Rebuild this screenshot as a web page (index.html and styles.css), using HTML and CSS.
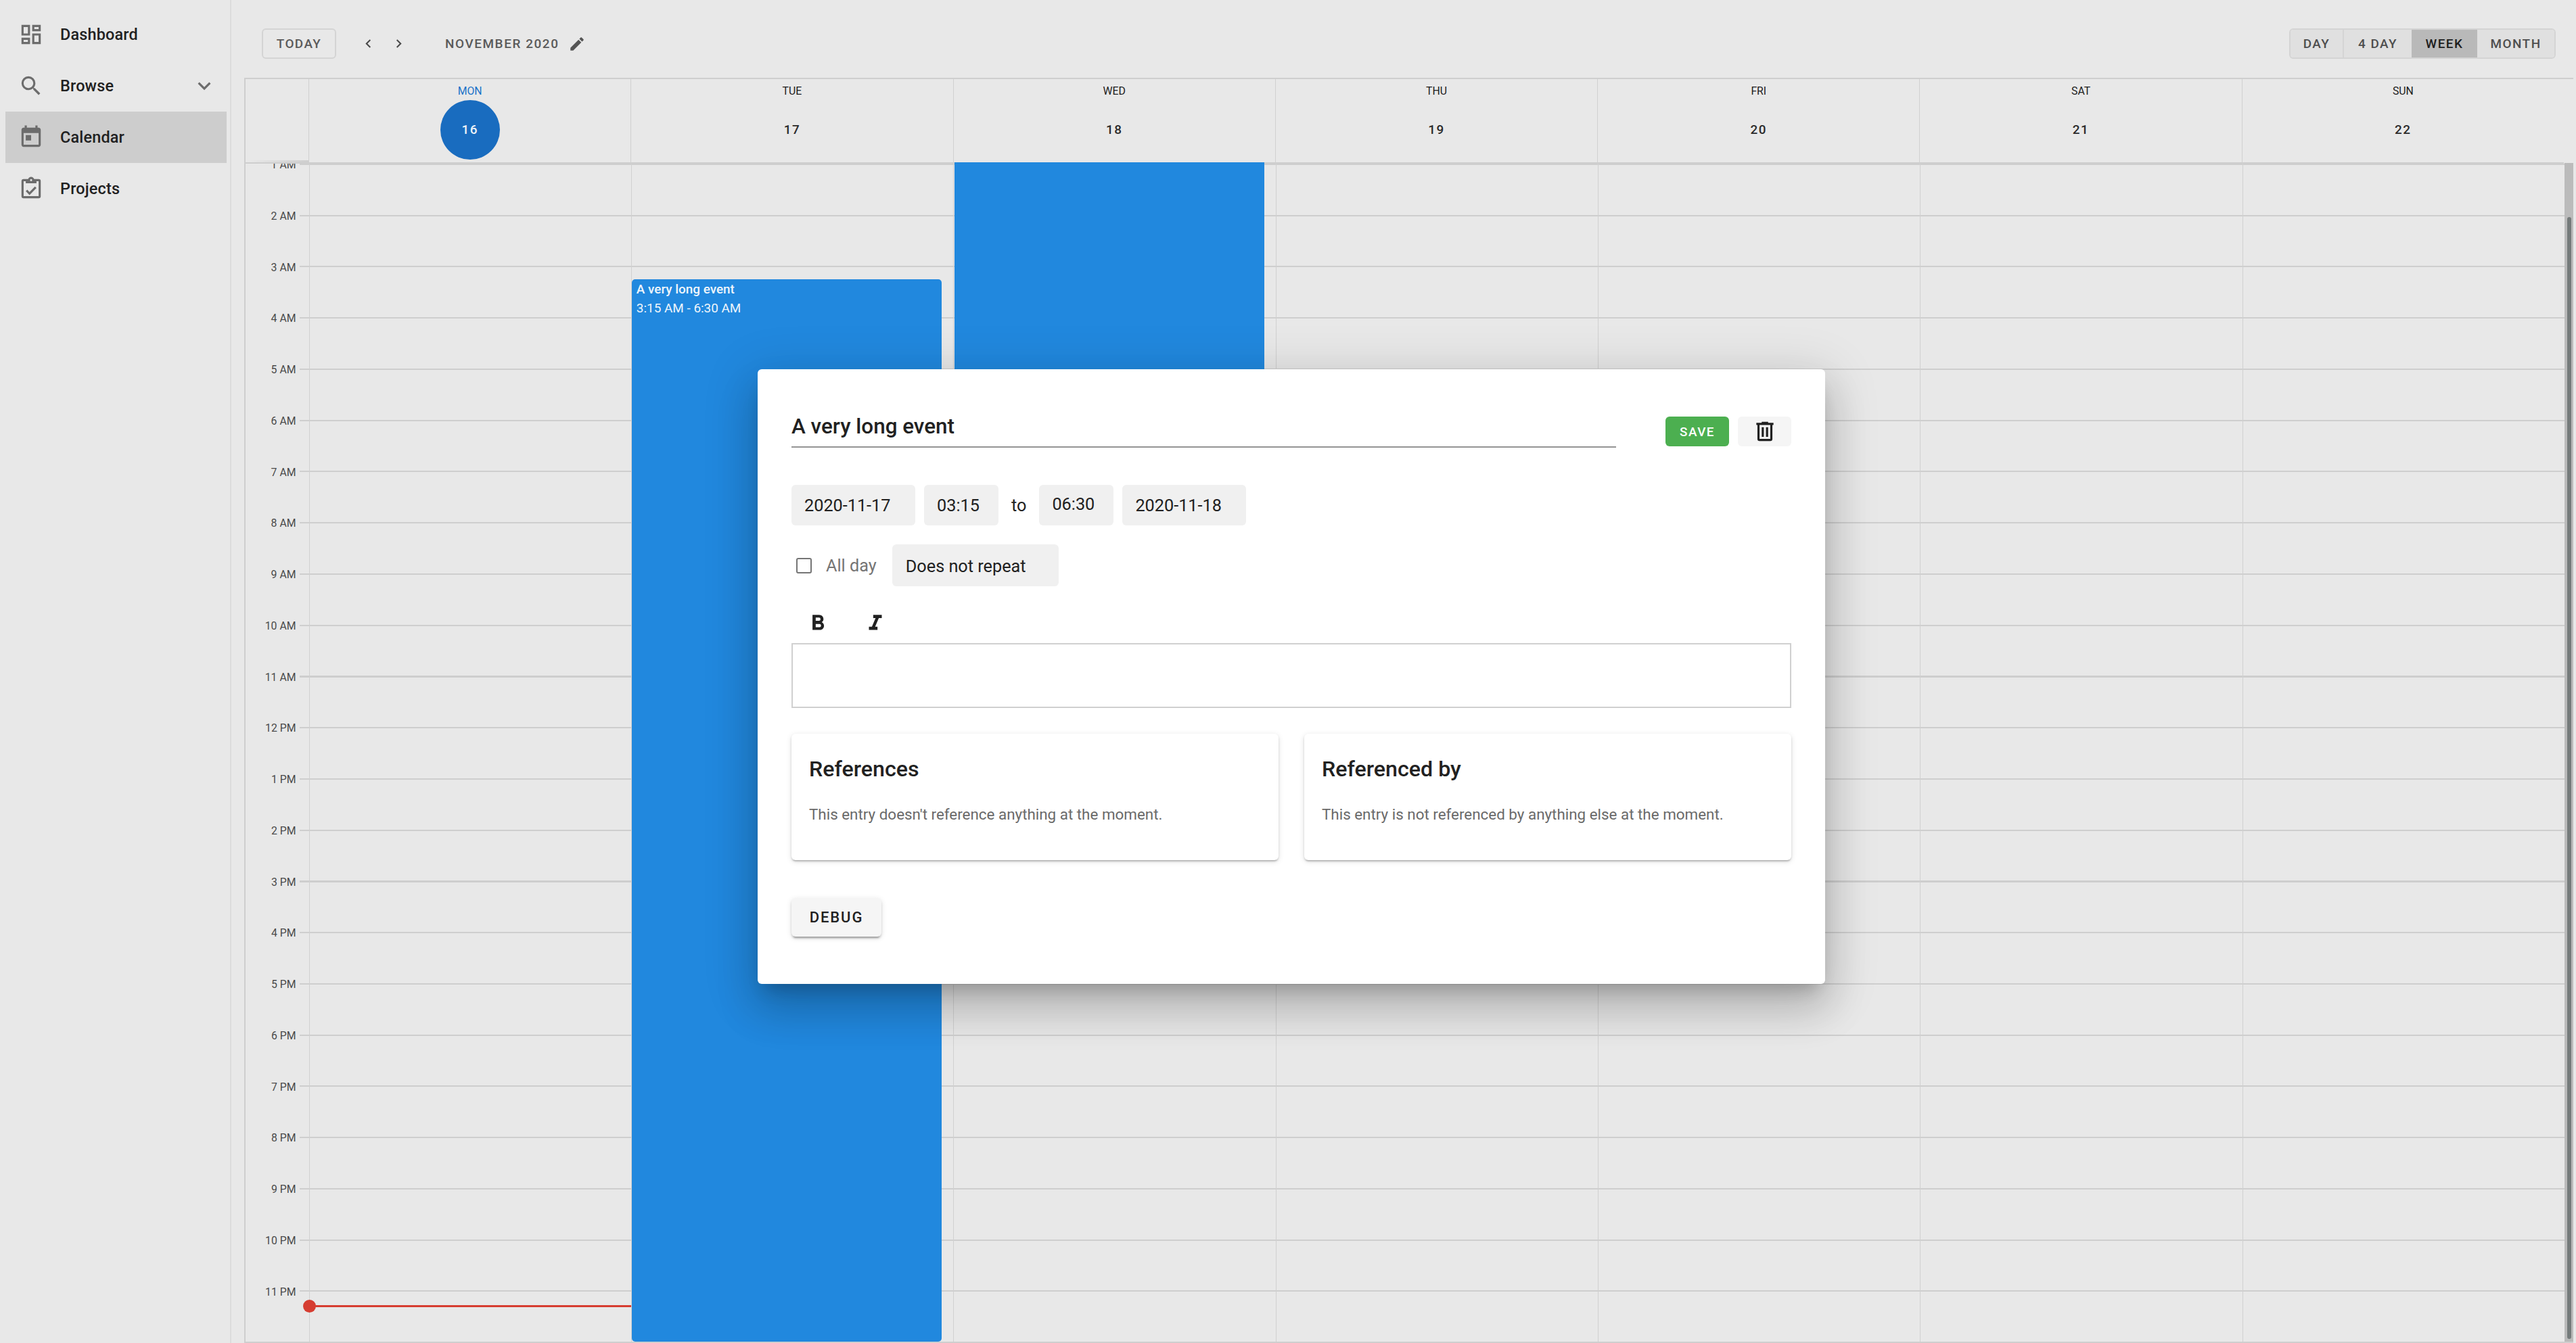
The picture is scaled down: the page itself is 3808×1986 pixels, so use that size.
FILE: index.html
```html
<!DOCTYPE html>
<html lang="en">
<head>
    <meta charset="UTF-8">
    <title>Calendar</title>
    <link rel="stylesheet" href="styles.css">
</head>
<body>
    <!-- Sidebar -->
    <nav class="sidebar">
        <a class="nav-item">
            <svg class="nav-icon" viewBox="0 0 24 24"><path d="M19,5V7H15V5H19M9,5V11H5V5H9M19,13V19H15V13H19M9,17V19H5V17H9M21,3H13V9H21V3M11,3H3V13H11V3M21,11H13V21H21V11M11,15H3V21H11V15Z"/></svg>
            <span>Dashboard</span>
        </a>
        <a class="nav-item">
            <svg class="nav-icon" viewBox="0 0 24 24"><path d="M9.5,3A6.5,6.5 0 0,1 16,9.5C16,11.11 15.41,12.59 14.44,13.73L14.71,14H15.5L20.5,19L19,20.5L14,15.5V14.71L13.73,14.44C12.59,15.41 11.11,16 9.5,16A6.5,6.5 0 0,1 3,9.5A6.5,6.5 0 0,1 9.5,3M9.5,5C7,5 5,7 5,9.5C5,12 7,14 9.5,14C12,14 14,12 14,9.5C14,7 12,5 9.5,5Z"/></svg>
            <span>Browse</span>
            <svg class="nav-caret" viewBox="0 0 24 24"><path d="M7.41,8.58L12,13.17L16.59,8.58L18,10L12,16L6,10L7.41,8.58Z"/></svg>
        </a>
        <a class="nav-item active">
            <svg class="nav-icon" viewBox="0 0 24 24"><path d="M7 10H12V15H7V10M19 19H5V8H19V19M19 3H18V1H16V3H8V1H6V3H5C3.89 3 3 3.9 3 5V19C3 20.1 3.9 21 5 21H19C20.1 21 21 20.1 21 19V5C21 3.9 20.1 3 19 3Z"/></svg>
            <span>Calendar</span>
        </a>
        <a class="nav-item">
            <svg class="nav-icon" viewBox="0 0 24 24"><path d="M19,3H14.82C14.4,1.84 13.3,1 12,1C10.7,1 9.6,1.84 9.18,3H5A2,2 0 0,0 3,5V19A2,2 0 0,0 5,21H19A2,2 0 0,0 21,19V5A2,2 0 0,0 19,3M12,3A1,1 0 0,1 13,4A1,1 0 0,1 12,5A1,1 0 0,1 11,4A1,1 0 0,1 12,3M7,7H17V5H19V19H5V5H7V7M17,11.4L15.6,10L10.5,15.1L8.4,13L7,14.4L10.5,18L17,11.4Z"/></svg>
            <span>Projects</span>
        </a>
    </nav>

    <main class="main">
        <!-- Toolbar -->
        <div class="toolbar">
            <button class="btn-today">TODAY</button>
            <svg class="chevron chevron-prev" viewBox="0 0 24 24"><path d="M15.41,16.58L10.83,12L15.41,7.41L14,6L8,12L14,18L15.41,16.58Z"/></svg>
            <svg class="chevron chevron-next" viewBox="0 0 24 24"><path d="M8.59,16.58L13.17,12L8.59,7.41L10,6L16,12L10,18L8.59,16.58Z"/></svg>
            <span class="month">NOVEMBER 2020</span>
            <svg class="pencil" viewBox="0 0 24 24"><path d="M20.71,7.04C21.1,6.65 21.1,6 20.71,5.63L18.37,3.29C18,2.9 17.35,2.9 16.96,3.29L15.12,5.12L18.87,8.87M3,17.25V21H6.75L17.81,9.93L14.06,6.18L3,17.25Z"/></svg>
            <div class="view-toggle">
                <button class="view-btn view-day">DAY</button>
                <button class="view-btn view-four">4 DAY</button>
                <button class="view-btn view-week active">WEEK</button>
                <button class="view-btn view-month">MONTH</button>
            </div>
        </div>

        <!-- Calendar -->
        <div class="calendar">
            <div class="cal-head">
                <div class="corner"></div>
                <div class="head-cell today"><span class="head-name">MON</span><span class="head-date">16</span></div>
                <div class="head-cell"><span class="head-name">TUE</span><span class="head-date">17</span></div>
                <div class="head-cell"><span class="head-name">WED</span><span class="head-date">18</span></div>
                <div class="head-cell"><span class="head-name">THU</span><span class="head-date">19</span></div>
                <div class="head-cell"><span class="head-name">FRI</span><span class="head-date">20</span></div>
                <div class="head-cell"><span class="head-name">SAT</span><span class="head-date">21</span></div>
                <div class="head-cell"><span class="head-name">SUN</span><span class="head-date">22</span></div>
            </div>
            <div class="cal-body">
                <div class="times">
                    <div class="hour"><span>1 AM</span></div>
                    <div class="hour"><span>2 AM</span></div>
                    <div class="hour"><span>3 AM</span></div>
                    <div class="hour"><span>4 AM</span></div>
                    <div class="hour"><span>5 AM</span></div>
                    <div class="hour"><span>6 AM</span></div>
                    <div class="hour"><span>7 AM</span></div>
                    <div class="hour"><span>8 AM</span></div>
                    <div class="hour"><span>9 AM</span></div>
                    <div class="hour"><span>10 AM</span></div>
                    <div class="hour"><span>11 AM</span></div>
                    <div class="hour"><span>12 PM</span></div>
                    <div class="hour"><span>1 PM</span></div>
                    <div class="hour"><span>2 PM</span></div>
                    <div class="hour"><span>3 PM</span></div>
                    <div class="hour"><span>4 PM</span></div>
                    <div class="hour"><span>5 PM</span></div>
                    <div class="hour"><span>6 PM</span></div>
                    <div class="hour"><span>7 PM</span></div>
                    <div class="hour"><span>8 PM</span></div>
                    <div class="hour"><span>9 PM</span></div>
                    <div class="hour"><span>10 PM</span></div>
                    <div class="hour"><span>11 PM</span></div>
                </div>
                <div class="day">
                    <div class="now-line"></div>
                </div>
                <div class="day">
                    <div class="event event-tue">
                        <div class="event-title">A very long event</div>
                        <div class="event-time">3:15 AM - 6:30 AM</div>
                    </div>
                </div>
                <div class="day">
                    <div class="event event-wed"></div>
                </div>
                <div class="day"></div>
                <div class="day"></div>
                <div class="day"></div>
                <div class="day"></div>
                <div class="scrollbar"><div class="scroll-thumb"></div></div>
            </div>
        </div>
    </main>

    <!-- Event dialog -->
    <div class="dialog">
        <div class="dialog-top">
            <div class="title-field">A very long event</div>
            <button class="btn-save">SAVE</button>
            <button class="btn-delete">
                <svg viewBox="0 0 24 24"><path d="M9,3V4H4V6H5V19A2,2 0 0,0 7,21H17A2,2 0 0,0 19,19V6H20V4H15V3H9M7,6H17V19H7V6M9,8V17H11V8H9M13,8V17H15V8H13Z"/></svg>
            </button>
        </div>
        <div class="date-row">
            <div class="chip chip-date">2020-11-17</div>
            <div class="chip chip-time">03:15</div>
            <span class="to">to</span>
            <div class="chip chip-time chip-end">06:30</div>
            <div class="chip chip-date">2020-11-18</div>
        </div>
        <div class="option-row">
            <span class="checkbox"></span>
            <span class="allday">All day</span>
            <div class="chip chip-select">Does not repeat</div>
        </div>
        <div class="format-row">
            <svg viewBox="0 0 24 24"><path d="M13.5,15.5H10V12.5H13.5A1.5,1.5 0 0,1 15,14A1.5,1.5 0 0,1 13.5,15.5M10,6.5H13A1.5,1.5 0 0,1 14.5,8A1.5,1.5 0 0,1 13,9.5H10M15.6,10.79C16.57,10.11 17.25,9 17.25,8C17.25,5.74 15.5,4 13.25,4H7V18H14.04C16.14,18 17.75,16.3 17.75,14.21C17.75,12.69 16.89,11.39 15.6,10.79Z"/></svg>
            <svg viewBox="0 0 24 24"><path d="M10,4V7H12.21L8.79,15H6V18H14V15H11.79L15.21,7H18V4H10Z"/></svg>
        </div>
        <div class="editor"></div>
        <div class="ref-cards">
            <div class="ref-card">
                <h3>References</h3>
                <p>This entry doesn't reference anything at the moment.</p>
            </div>
            <div class="ref-card">
                <h3>Referenced by</h3>
                <p>This entry is not referenced by anything else at the moment.</p>
            </div>
        </div>
        <button class="btn-debug">DEBUG</button>
    </div>
</body>
</html>
```

FILE: styles.css
```css
* {
    box-sizing: border-box;
}
body {
    margin: 0;
    width: 3808px;
    height: 1986px;
    display: flex;
    overflow: hidden;
    font-family: Roboto, sans-serif;
    background-color: #e8e8e8;
    color: #212121;
}
button {
    font-family: inherit;
    border: 0;
    padding: 0;
}

/* Sidebar */
.sidebar {
    width: 342px;
    flex-shrink: 0;
    padding: 13px 5px 0 8px;
    border-right: 2px solid #dcdcdc;
}
.nav-item {
    height: 76px;
    display: flex;
    align-items: center;
    padding-left: 19px;
    gap: 24px;
    font-size: 23.4px;
    font-weight: 500;
    letter-spacing: 0.2px;
    color: #212121;
}
.nav-item.active {
    background-color: #cdcdcd;
}
.nav-icon {
    width: 38px;
    height: 38px;
    fill: #6c6c6c;
}
.nav-caret {
    width: 38px;
    height: 38px;
    margin-left: auto;
    margin-right: 14px;
    fill: #6c6c6c;
}

/* Toolbar */
.main {
    flex: 1;
    min-width: 0;
    padding: 0 4px 0 19px;
}
.toolbar {
    height: 115px;
    display: flex;
    align-items: center;
    padding: 14px 26px 0 26px;
}
.btn-today {
    width: 110px;
    height: 45px;
    background: transparent;
    border: 2px solid #d4d4d4;
    border-radius: 6px;
    font-size: 18.9px;
    font-weight: 500;
    letter-spacing: 1.4px;
    color: #5a5a5a;
}
.chevron {
    width: 25px;
    height: 25px;
    fill: #4a4a4a;
}
.chevron-prev {
    margin-left: 35px;
}
.chevron-next {
    margin-left: 20px;
}
.month {
    margin-left: 56px;
    font-size: 18.9px;
    font-weight: 500;
    letter-spacing: 1.6px;
    color: #5a5a5a;
}
.pencil {
    width: 26px;
    height: 26px;
    margin-left: 13px;
    fill: #555;
}
.view-toggle {
    margin-left: auto;
    height: 45px;
    display: flex;
    border: 2px solid #d4d4d4;
    border-radius: 6px;
    overflow: hidden;
}
.view-btn {
    background-color: #e0e0e0;
    font-size: 18.9px;
    font-weight: 500;
    letter-spacing: 1.5px;
    color: #4e4e4e;
}
.view-day {
    width: 79px;
    border-right: 2px solid #d4d4d4;
}
.view-four {
    width: 100px;
}
.view-week {
    width: 97px;
}
.view-month {
    width: 114px;
}
.view-btn.active {
    background-color: #b9b9b9;
    color: #1e1e1e;
}

/* Calendar */
.calendar {
    border-top: 2px solid #cecece;
    border-left: 2px solid #cecece;
    height: 1871px;
    display: flex;
    flex-direction: column;
}
.cal-head {
    flex-shrink: 0;
    height: 125px;
    display: grid;
    grid-template-columns: 93px repeat(7, 1fr);
    margin-right: 14px;
    border-bottom: 2px solid #cecece;
}
.corner {
    background: linear-gradient(to right, transparent 3%, #cecece) no-repeat bottom / 100% 3px;
}
.head-cell {
    display: flex;
    flex-direction: column;
    align-items: center;
    padding-top: 4px;
    border-left: 1px solid #d0d0d0;
}
.head-name {
    height: 27px;
    line-height: 27px;
    font-size: 15.8px;
    color: #1c1c1c;
}
.head-date {
    width: 88px;
    height: 88px;
    line-height: 88px;
    text-align: center;
    font-size: 18.9px;
    font-weight: 500;
    letter-spacing: 1.5px;
    color: #2a2a2a;
}
.today .head-name {
    color: #1b72c9;
}
.today .head-date {
    border-radius: 50%;
    background-color: #196cbf;
    color: #f0f4f8;
}
.cal-body {
    flex: 1;
    min-height: 0;
    position: relative;
    display: flex;
    border-bottom: 2px solid #cecece;
    --hour-lines: repeating-linear-gradient(to bottom, #cecece 0, #cecece 2px, transparent 2px, transparent 75.75px);
}
.times {
    width: 93.5px;
    flex-shrink: 0;
    overflow: hidden;
    background: var(--hour-lines) no-repeat right top / 14px 100%;
}
.hour {
    height: 75.75px;
    display: flex;
    justify-content: flex-end;
    padding-right: 19px;
}
.hour span {
    height: 20px;
    line-height: 20px;
    transform: translateY(-8px);
    font-size: 15.8px;
    color: #4a4a4a;
}
.day {
    flex: 1;
    position: relative;
    border-left: 1px solid #d0d0d0;
    background: var(--hour-lines);
}
.event {
    position: absolute;
    left: 0;
    width: 458px;
    border-radius: 5px;
    background-color: #2188de;
    color: #eef5fb;
}
.event-tue {
    top: 171px;
    bottom: 0;
    padding: 1px 7px;
    font-size: 18.9px;
    line-height: 28px;
}
.event-wed {
    left: 1px;
    top: -2px;
    height: 420px;
    border-radius: 0;
}
.event-title {
    font-weight: 500;
}
.now-line {
    position: absolute;
    left: 0;
    right: 0;
    top: 1688px;
    height: 3px;
    background-color: #d63d31;
}
.now-line::before {
    content: "";
    position: absolute;
    left: -10px;
    top: -8px;
    width: 19px;
    height: 19px;
    border-radius: 50%;
    background-color: #d63d31;
}
.scrollbar {
    width: 13px;
    flex-shrink: 0;
    margin-top: -1px;
    padding: 80px 3px 4px 4px;
    background-color: #bbb;
}
.scroll-thumb {
    height: 100%;
    border-radius: 3px;
    background-color: #757b7b;
}

/* Event dialog */
.dialog {
    position: absolute;
    left: 1120px;
    top: 546px;
    width: 1578px;
    height: 909px;
    padding: 70px 50px 0;
    background-color: #fff;
    border-radius: 6px;
    box-shadow: 0 17px 24px -11px rgba(0, 0, 0, 0.2), 0 38px 60px 5px rgba(0, 0, 0, 0.14), 0 14px 73px 13px rgba(0, 0, 0, 0.12);
}
.dialog-top {
    height: 46px;
    display: flex;
    align-items: flex-start;
    gap: 13px;
}
.title-field {
    flex: 1;
    height: 46px;
    margin-right: 60px;
    border-bottom: 2px solid #949494;
    font-size: 31.4px;
    font-weight: 500;
    line-height: 30px;
}
.btn-save {
    width: 94px;
    height: 44px;
    border-radius: 6px;
    background-color: #4caf50;
    color: #fff;
    font-size: 18.9px;
    font-weight: 500;
    letter-spacing: 1.5px;
}
.btn-delete {
    width: 79px;
    height: 44px;
    border-radius: 6px;
    background-color: #f5f5f5;
    display: flex;
    align-items: center;
    justify-content: center;
}
.btn-delete svg {
    width: 38px;
    height: 38px;
    fill: #212121;
}
.date-row {
    margin-top: 55px;
    display: flex;
    align-items: center;
    gap: 13px;
}
.chip {
    height: 60px;
    padding-left: 19px;
    border-radius: 6px;
    background-color: #f0f0f0;
    font-size: 25.25px;
    line-height: 62px;
}
.chip-date {
    width: 183px;
}
.chip-time {
    width: 110px;
}
.chip-end {
    line-height: 57px;
}
.to {
    margin: 0 6px;
    font-size: 25.25px;
}
.option-row {
    margin-top: 28px;
    display: flex;
    align-items: center;
}
.checkbox {
    width: 23px;
    height: 23px;
    margin-left: 7px;
    border: 2.5px solid #757575;
    border-radius: 3px;
}
.allday {
    margin-left: 21px;
    font-size: 25.25px;
    color: #757575;
}
.chip-select {
    width: 246px;
    height: 62px;
    line-height: 66px;
    margin-left: 23px;
    padding-left: 20px;
}
.format-row {
    height: 84px;
    display: flex;
    align-items: flex-start;
    gap: 47px;
    padding: 36px 0 0 20px;
}
.format-row svg {
    width: 38px;
    height: 38px;
    fill: #212121;
}
.editor {
    height: 96px;
    border: 2px solid #d0d0d0;
}
.ref-cards {
    margin-top: 38px;
    display: grid;
    grid-template-columns: 1fr 1fr;
    gap: 38px;
}
.ref-card {
    height: 187px;
    padding: 32px 26px 0;
    border-radius: 6px;
    box-shadow: 0 3px 2px -2px rgba(0, 0, 0, 0.2), 0 2px 3px 0 rgba(0, 0, 0, 0.14), 0 2px 8px 0 rgba(0, 0, 0, 0.12);
}
.ref-card h3 {
    margin: 0;
    font-size: 32.2px;
    font-weight: 500;
    line-height: 40px;
}
.ref-card p {
    margin: 31px 0 0;
    font-size: 22.4px;
    line-height: 32px;
    color: #6a6a6a;
}
.btn-debug {
    display: block;
    margin-top: 56px;
    width: 133px;
    height: 57px;
    border-radius: 6px;
    background-color: #f5f5f5;
    box-shadow: 0 5px 2px -3px rgba(0, 0, 0, 0.2), 0 3px 3px 0 rgba(0, 0, 0, 0.14), 0 2px 8px 0 rgba(0, 0, 0, 0.12);
    font-size: 22px;
    font-weight: 500;
    letter-spacing: 1.9px;
    color: #212121;
}
```
